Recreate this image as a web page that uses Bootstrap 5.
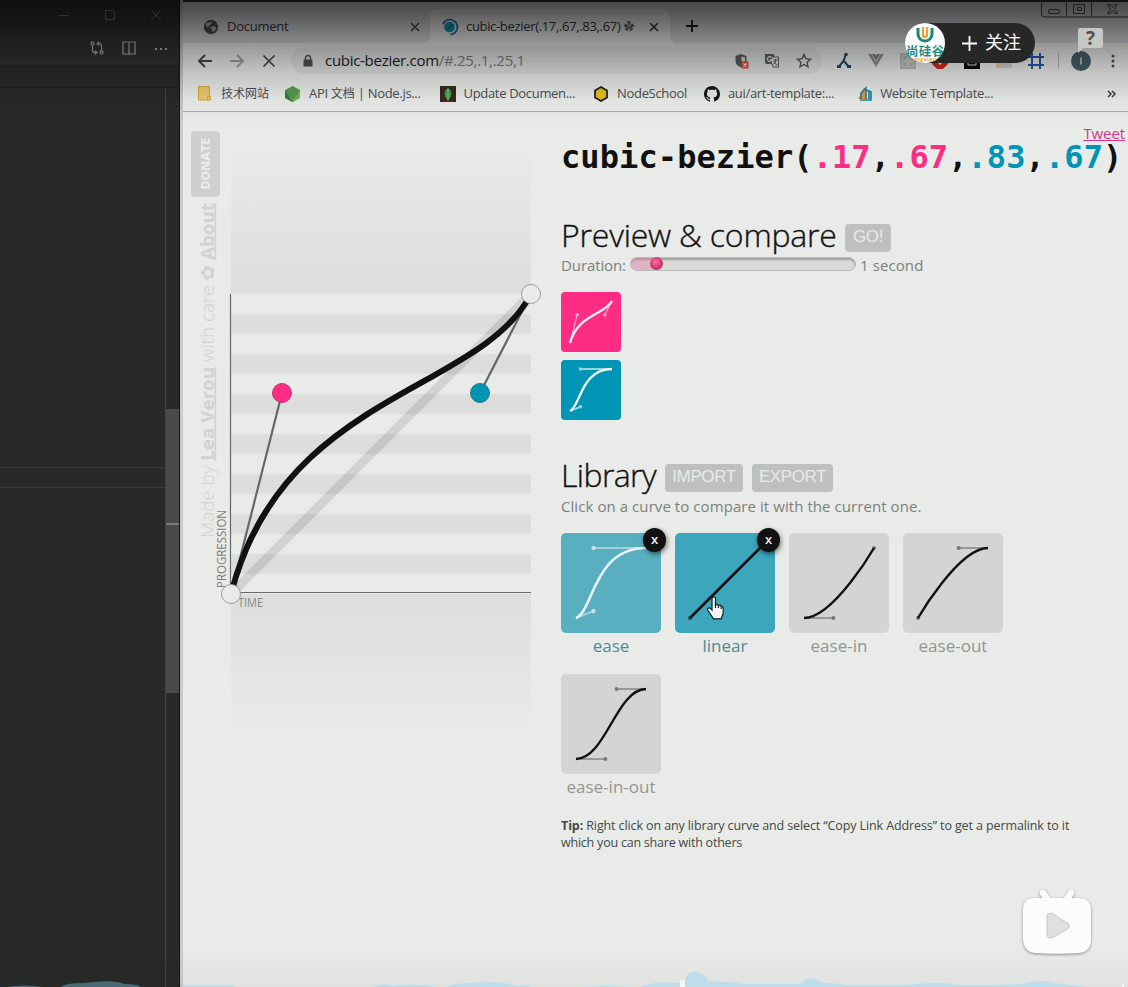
<!DOCTYPE html>
<html lang="zh-CN">
<head>
<meta charset="utf-8">
<meta name="viewport" content="width=device-width, initial-scale=1">
<title>cubic-bezier</title>
<link href="https://cdn.jsdelivr.net/npm/bootstrap@5.3.0/dist/css/bootstrap.min.css" rel="stylesheet">
<style>
  body { width: 1128px; height: 987px; background: #e8ebe7; font-family: "Open Sans", "Noto Sans CJK SC", sans-serif; color: #111; }
  svg { display: block; flex: none; overflow: visible; }
  .shade { top: 0; left: 0; right: 0; height: 125px; z-index: 5; pointer-events: none;
    background: linear-gradient(rgba(0,0,0,.68) 0, rgba(0,0,0,.62) 12px, rgba(0,0,0,.40) 40px, rgba(0,0,0,.20) 70px, rgba(0,0,0,.06) 100px, transparent 125px); }
  .shade-low { bottom: 0; left: 0; right: 0; height: 40px; pointer-events: none; background: linear-gradient(transparent, rgba(0,0,0,.04)); }

  /* code editor */
  .editor { width: 180px; background: #282a28; border-right: 1px solid #151615; }
  .ed-title { height: 30px; background: #2d302e; gap: 34px; padding-right: 17px; }
  .ed-tabs { height: 35px; background: #303331; gap: 18px; padding-right: 11px; }
  .ed-path { height: 23px; border-bottom: 1px solid #202220; }
  .ed-code { border-right: 1px solid #414340; }
  .ed-line { height: 21px; margin-top: 379px; border: solid #383a38; border-width: 1px 0; }
  .ed-scroll { width: 13px; }
  .ed-thumb { height: 284px; margin-top: 321px; background: #494b49; padding-top: 114px; }
  .ed-thumb div { height: 2px; background: #7a7c7a; }

  /* browser chrome */
  .browser { width: 948px; border-left: 3px solid #c9cccb; }
  .tabstrip { height: 43px; background: #dadce0; border-top: 2px solid #333; padding-top: 7px; font-size: 13px; color: #303436; }
  .tab-idle { width: 247px; padding: 2px 10px 0 20px; }
  .tab-live { width: 240px; padding: 2px 11px 0 12px; background: #eef0ee; border-radius: 8px 8px 0 0; }
  .tab-live::before, .tab-live::after { content: ""; position: absolute; bottom: 0; width: 8px; height: 8px; }
  .tab-live::before { left: -8px; background: radial-gradient(circle at 0 0, transparent 8px, #eef0ee 8.5px); }
  .tab-live::after { right: -8px; background: radial-gradient(circle at 100% 0, transparent 8px, #eef0ee 8.5px); }
  .t-doc { letter-spacing: -.25px; }
  .t-title { letter-spacing: -.33px; }
  .t-title i { font-style: normal; font-size: 11px; color: #66696b; }
  .toolbar { height: 34px; padding-top: 1px; background: #eef0ee; }
  .omni { width: 531px; height: 27px; border-radius: 14px; background: #e4e6e5; margin-left: 15px; padding: 0 10px 0 12px; font-size: 15px; color: #1b1d1e; letter-spacing: -.29px; }
  .omni i { font-style: normal; color: #7b8083; }
  .bookmarks { height: 35px; padding-bottom: 1px; background: #eef0ee; border-bottom: 1px solid #a9acaa; font-size: 13px; color: #4b4f53; letter-spacing: -.32px; }
  .bookmarks span, .tabstrip span, .omni span { white-space: nowrap; flex: none; }
  .bookmarks .cjk { font-size: 12px; margin: 0; letter-spacing: 0; }

  /* page */
  .plot { width: 378px; }
  .donate { left: 8px; top: 19px; width: 29px; height: 66px; border-radius: 4px; background: #cdd0cc; color: #e8ebe7; }
  .vert { writing-mode: vertical-rl; transform: rotate(180deg); white-space: nowrap; }
  .donate .vert { font-size: 12.2px; font-weight: 800; line-height: 15px; }
  .main-col { padding-top: 25px; width: 567px; }
  .tweet { right: 3px; top: 12px; font-size: 15px; line-height: 18px; color: #d6338a; letter-spacing: -.1px; }
  h1 { font: bold 32px/40px "DejaVu Sans Mono", monospace; letter-spacing: .09px; margin: 0 0 38px; white-space: nowrap; }
  .pk { color: #ff2c83; } .bl { color: #0095b5; }
  h2 { font-size: 32px; line-height: 42px; font-weight: 300; -webkit-text-stroke: .35px #111; margin: -2px 0 0; white-space: nowrap; letter-spacing: -.2px; }
  h2.h-lib { letter-spacing: -.6px; }
  .tagbtn { border: 0; border-radius: 4px; background: #bdc0bd; color: #e8ebe7; font: 17px/26px "Liberation Sans", sans-serif; letter-spacing: -.4px; padding: 0 0 2px; height: 28px; margin-top: 4px; }
  .dim { color: #7d807e; font-size: 15px; line-height: 18px; white-space: nowrap; }
  .t-click { letter-spacing: .07px; }
  .track { width: 226px; height: 14px; border-radius: 7px; background: #d9dbd8; border: 1px solid #b9bbb8; box-shadow: inset 0 2px 2px rgba(0,0,0,.28); overflow: hidden; }
  .track div { width: 25px; height: 12px; background: rgba(230,130,175,.45); }
  .knob { left: 20px; top: 0; width: 13px; height: 13px; border-radius: 50%; background: radial-gradient(circle at 45% 40%, #f670a4, #c9205f 75%); }
  .mini { width: 60px; height: 60px; border-radius: 4px; margin-bottom: 8px; }
  .curves { gap: 0 14px; padding-top: 18px; width: 460px; }
  .curve-item { width: 100px; height: 141px; font-size: 17px; line-height: 26px; color: #939694; text-align: center; white-space: nowrap; }
  .tile { height: 100px; border-radius: 5px; background: #d3d5d2; }
  .kill { right: -5px; top: -5px; width: 23px; height: 24px; border-radius: 50%; background: #111; color: #eee; font-size: 13px; font-weight: 600; line-height: 22px; box-shadow: 1px 2px 5px rgba(0,0,0,.55); }
  .tip { font-size: 12.5px; line-height: 17px; color: #444846; white-space: nowrap; letter-spacing: -.11px; }

  /* video player overlay */
  .follow { left: 905px; top: 23px; width: 130px; height: 40px; border-radius: 20px; background: #272727; color: #fff; font-size: 18px; z-index: 6; }
  .over { z-index: 6; }
</style>
</head>
<body class="position-relative overflow-hidden d-flex">

<svg width="0" height="0" class="position-absolute">
  <defs>
    <g id="c-ease"><path d="M15 85 32.5 78M85 15H32.5" stroke-width="2" opacity=".5"/><path d="M15 85C32.5 78 32.5 15 85 15" fill="none" stroke-width="2.6"/><g stroke="none" fill="currentColor" opacity=".7"><circle cx="32.500" cy="78" r="2.200"/><circle cx="32.500" cy="15" r="2.200"/></g></g>
  </defs>
</svg>

<aside class="editor d-flex flex-column flex-shrink-0">
  <div class="ed-title d-flex align-items-center justify-content-end">
    <svg width="12" height="12" stroke="#777"><path d="M0 6.500h11"/></svg>
    <svg width="12" height="12" stroke="#777" fill="none"><path d="M1.500 1.500h9v9h-9z"/></svg>
    <svg width="12" height="12" stroke="#777"><path d="m1 1 10 10M11 1 1 11"/></svg>
  </div>
  <div class="ed-tabs d-flex align-items-center justify-content-end">
    <svg width="14" height="14" viewBox="0 0 14 14" fill="none" stroke="#a6a8a6" stroke-width="1.300"><circle cx="2.500" cy="2.500" r="1.500"/><circle cx="11.500" cy="11.500" r="1.500"/><path d="M2.500 4v5.500q0 2 2 2H7M5 9.500l2 2-2 2M11.500 10V4.500q0-2-2-2H7m2-2-2 2 2 2"/></svg>
    <svg width="14" height="14" fill="none" stroke="#b4b6b4" stroke-width="1.200"><path d="M1 1h12v12H1zM7 1v12"/></svg>
    <svg width="14" height="14" fill="#b4b6b4"><path d="M1 7h2v2H1zM6 7h2v2H6zM11 7h2v2h-2z"/></svg>
  </div>
  <div class="ed-path"></div>
  <div class="d-flex flex-grow-1">
    <div class="ed-code flex-grow-1"><div class="ed-line"></div></div>
    <div class="ed-scroll"><div class="ed-thumb"><div></div></div></div>
  </div>
</aside>

<section class="browser d-flex flex-column flex-shrink-0">
  <div class="tabstrip d-flex">
    <div class="tab-idle d-flex align-items-center">
      <svg width="16" height="16" viewBox="0 0 16 16" class="me-2"><circle cx="8" cy="8" r="7.200" fill="#4a4d50"/><path d="M3 4c2-1 3 0 5-1.500l1 1.500-2 1.500-1 2-3 .5zM8 8l3-1 2.500 1.500-1.500 3-2.500 1.500-.5-3L7 9z" fill="#b5b7b8"/></svg>
      <span class="t-doc">Document</span>
      <svg width="10" height="10" class="ms-auto" stroke="#4e5154" stroke-width="1.600"><path d="m1 1 8 8M9 1 1 9"/></svg>
    </div>
    <div class="tab-live d-flex align-items-center position-relative">
      <svg width="16" height="17" viewBox="0 0 17 17" class="me-2"><circle cx="8" cy="8" r="5.700" fill="#10a5b5"/><path d="M1 5A8 8 0 1 1 9 16" fill="none" stroke="#2463c4" stroke-width="1.800"/><path d="M5.500 11 11 5.500" stroke="#0a5f77" stroke-width="1.300"/></svg>
      <span class="t-title">cubic-bezier(.17,.67,.83,.67) <i>✿</i></span>
      <svg width="10" height="10" class="ms-auto" stroke="#3e4144" stroke-width="1.700"><path d="m1 1 8 8M9 1 1 9"/></svg>
    </div>
    <svg width="12" height="12" class="align-self-center" style="margin-left:16px" stroke="#1c1e20" stroke-width="1.900"><path d="M6 0v12M0 6h12"/></svg>
  </div>

  <div class="toolbar d-flex align-items-center">
    <svg width="16" height="14" style="margin-left:14px" fill="none" stroke="#45484a" stroke-width="1.900"><path d="M15 7H2M8 1 2 7l6 6"/></svg>
    <svg width="16" height="14" style="margin-left:16px" fill="none" stroke="#a0a3a4" stroke-width="1.900"><path d="M1 7h13M8 1l6 6-6 6"/></svg>
    <svg width="14" height="14" style="margin-left:17px" stroke="#45484a" stroke-width="1.700"><path d="m1.500 1.500 11 11M12.500 1.500l-11 11"/></svg>
    <div class="omni d-flex align-items-center">
      <svg width="10" height="12" fill="#505356"><path d="M1 4.500h8q.5 0 .5.500v6.500H.5V5q0-.5.500-.5z"/><path d="M2.500 5V3a2.500 2.500 0 0 1 5 0v2" fill="none" stroke="#505356" stroke-width="1.400"/></svg>
      <span class="t-url" style="margin-left:12px">cubic-bezier.com<i>/#.25,.1,.25,1</i></span>
      <svg width="14" height="16" class="ms-auto"><path d="M6 1 11.500 3v5q0 4-5.500 6.500Q.5 12 .5 8V3z" fill="#5b5e60"/><path d="M6.500 3.500 10 4.500v4H6.500z" fill="#ddd"/><path d="M6.500 8.500h7v7h-7z" fill="#e0503a"/><path d="m8.500 10.500 3 3m0-3-3 3" stroke="#fff" stroke-width="1.100"/></svg>
      <svg width="15" height="15" style="margin-left:15px"><path d="M1 1h9l1.500 10H2.500Q1 11 1 9z" fill="#5d6063"/><path d="M8 4h6.500v10H9l-1-3" fill="#e2e4e4" stroke="#5d6063"/><path d="M7.500 4.500a2.300 2.300 0 1 0 .5 2H6" fill="none" stroke="#e8e8e8" stroke-width="1.200"/><path d="M9.500 7h4M11.500 6q1 4-2 5m0-3q1 3 4 4" fill="none" stroke="#5d6063"/></svg>
      <svg width="16" height="16" viewBox="0 0 16 16" style="margin-left:17px" fill="none" stroke="#55585a" stroke-width="1.400"><path d="m8 1.500 1.900 4.200 4.600.5-3.400 3.100.9 4.500L8 11.500l-4 2.300.9-4.500L1.500 6.200l4.600-.5z"/></svg>
    </div>
    <svg width="14" height="16" style="margin-left:15px" fill="none" stroke="#234a68" stroke-width="2"><path d="M9 1 6.500 8 2 13.500M7 8l4.500 5.500"/><path d="M0 12h4v3H0zM10 12h4v3h-4zM7.500 0h3v3h-3z" fill="#234a68" stroke="none"/></svg>
    <svg width="16" height="13" style="margin-left:17px"><path d="M0 0h3.500L8 7.500 12.500 0H16L8 13z" fill="#929596"/><path d="M4 0h3l1 2 1-2h3L8 6.500z" fill="#777a7b"/></svg>
    <svg width="16" height="16" style="margin-left:16px" fill="none" stroke="#d8dada"><path d="M0 0h16v16H0z" fill="#b9bbbc" stroke="none"/><circle cx="8" cy="8" r="2"/><circle cx="5" cy="5" r="3"/><circle cx="11" cy="5" r="3"/><circle cx="5" cy="11" r="3"/><circle cx="11" cy="11" r="3"/></svg>
    <svg width="16" height="16" style="margin-left:16px"><path d="M5 0h6l5 5v6l-5 5H5l-5-5V5z" fill="#d5281c"/><path d="M5 9V4h6v5L8 12z" fill="#eee"/></svg>
    <svg width="16" height="16" style="margin-left:16px"><path d="M0 0h16v16H0z" fill="#0c0e0e"/><path d="M4 4h8v8H4z" fill="none" stroke="#ddd"/></svg>
    <svg width="16" height="16" style="margin-left:16px"><path d="M0 5h16v10H0z" fill="#d0d2ce"/><path d="M0 14 7 5l9 0-9 6z" fill="#edc566"/></svg>
    <svg width="16" height="16" style="margin-left:16px" fill="none" stroke="#2657ad" stroke-width="2"><path d="M4 0v16M12 0v16M0 4h16M0 12h16"/></svg>
    <svg width="1" height="16" style="margin-left:14px"><path d="M0 0h1v16H0z" fill="#b5b8b9"/></svg>
    <svg width="20" height="20" style="margin-left:12px"><circle cx="10" cy="10" r="10" fill="#4a606b"/><path d="M10 6.500v7" stroke="#eee" stroke-width="1.300"/></svg>
    <svg width="4" height="14" style="margin-left:20px" fill="#505355"><circle cx="2" cy="2" r="1.500"/><circle cx="2" cy="7" r="1.500"/><circle cx="2" cy="12" r="1.500"/></svg>
  </div>

  <div class="bookmarks d-flex align-items-center">
    <svg width="13" height="15" style="margin-left:15px"><path d="M.5.500h11v10h1v3.500H.5z" fill="#f2cc70" stroke="#d9a93a"/><path d="M9.500 14v-3.500h2.500" fill="none" stroke="#d9a93a"/></svg>
    <span class="cjk" style="margin-left:10px;padding-top:1px">技术网站</span>
    <svg width="15" height="16" style="margin-left:16px"><path d="m7.500 0 7.500 4v8l-7.500 4L0 12V4z" fill="#57a052"/><path d="m0 4 7.500 12L0 12z" fill="#3c7e42"/><path d="m15 4-7.500 12L15 12z" fill="#79b55e"/></svg>
    <span style="margin-left:9px">API <span class="cjk">文档</span> | Node.js...</span>
    <svg width="16" height="16" style="margin-left:19px"><path d="M0 0h16v16H0z" fill="#3b2a22"/><path d="M8 1.500q7 6.500 0 12.500-7-6 0-12.500z" fill="#3fa54a"/><path d="M8 3v12" stroke="#a7c99b" stroke-width=".8"/></svg>
    <span style="margin-left:8px">Update Documen...</span>
    <svg width="14" height="16" style="margin-left:19px"><path d="m7 1 6 3.500v7L7 15l-6-3.500v-7z" fill="#e9c51a" stroke="#222" stroke-width="1.800"/></svg>
    <span style="margin-left:9px">NodeSchool</span>
    <svg width="16" height="16" viewBox="0 0 16 16" style="margin-left:17px"><path fill="#15181a" d="M8 0C3.580 0 0 3.580 0 8c0 3.540 2.290 6.530 5.470 7.590.4.070.55-.17.55-.38 0-.19-.01-.82-.01-1.490-2.010.37-2.530-.49-2.690-.94-.09-.23-.48-.94-.82-1.130-.28-.15-.68-.52-.01-.53.63-.01 1.080.58 1.230.82.72 1.210 1.870.87 2.330.66.070-.52.280-.87.510-1.070-1.780-.2-3.640-.89-3.640-3.950 0-.87.31-1.590.82-2.150-.08-.2-.36-1.020.08-2.120 0 0 .67-.21 2.200.82.640-.18 1.320-.27 2-.27s1.360.09 2 .27c1.530-1.040 2.200-.82 2.200-.82.44 1.100.16 1.920.08 2.120.51.56.82 1.270.82 2.150 0 3.070-1.870 3.750-3.650 3.950.29.25.54.73.54 1.480 0 1.070-.01 1.930-.01 2.200 0 .21.15.46.55.38A8 8 0 0 0 8 0z"/></svg>
    <span style="margin-left:8px">aui/art-template:...</span>
    <svg width="14" height="15" style="margin-left:24px"><path d="m0 13 5-10 3-2v12z" fill="#ef9a35"/><path d="M3 13V7l5-5v11M8 4l3 1v8M11 5l2 1v8H2" fill="none" stroke="#2587ab" stroke-width="1.700"/></svg>
    <span style="margin-left:8px">Website Template...</span>
    <svg width="9" height="8" class="ms-auto" style="margin-right:12px" fill="none" stroke="#3d4043" stroke-width="1.500"><path d="m1 1 3 3-3 3M5 1l3 3-3 3"/></svg>
  </div>

  <div class="page d-flex flex-grow-1 position-relative">
    <div class="plot position-relative flex-shrink-0">
      <svg width="378" height="875" viewBox="183 112 378 875">
        <defs>
          <linearGradient id="up" x2="0" y2="1"><stop offset="0" stop-color="#dcdedb" stop-opacity="0"/><stop offset="1" stop-color="#dcdedb"/></linearGradient>
          <linearGradient id="dn" x2="0" y2="1"><stop offset="0" stop-color="#dcdedb"/><stop offset="1" stop-color="#dcdedb" stop-opacity="0"/></linearGradient>
        </defs>
        <text transform="translate(213.500 538) rotate(-90)" font-size="18" fill="#d0d3cf" font-weight="300" textLength="335" lengthAdjust="spacingAndGlyphs">Made by <tspan font-weight="700" text-decoration="underline">Lea Verou</tspan> with care <tspan font-family="DejaVu Sans" font-weight="700">✿</tspan> <tspan font-weight="700" text-decoration="underline">About</tspan></text>
        <path d="M231 144h300v150H231z" fill="url(#up)"/>
        <path d="M231 594h300v140H231z" fill="url(#dn)"/>
        <path d="M231 324h300M231 364h300M231 404h300M231 444h300M231 484h300M231 524h300M231 564h300" stroke="#dcdedb" stroke-width="20"/>
        <path d="M231 594 531 294" stroke="#000" stroke-opacity=".1" stroke-width="9"/>
        <path d="M230.500 294v299M230 592.500h301" stroke="#666966" stroke-width="1.200"/>
        <text transform="translate(226 588) rotate(-90)" font-size="12" fill="#7a7d7a" textLength="78" lengthAdjust="spacingAndGlyphs">PROGRESSION</text>
        <text x="238" y="607" font-size="12" fill="#868986" textLength="25" lengthAdjust="spacingAndGlyphs">TIME</text>
        <path d="M231 594 282 393M531 294 480 393" stroke="#656865" stroke-width="2.200"/>
        <path d="M231 594C282 393 480 393 531 294" fill="none" stroke="#111" stroke-width="6"/>
        <g stroke-width="1"><circle cx="231" cy="594" r="9.500" fill="#e8ebe7" stroke="#9b9d9b"/><circle cx="531" cy="294" r="9.500" fill="#e8ebe7" stroke="#9b9d9b"/><circle cx="282" cy="393" r="9.500" fill="#ff2c83" stroke="#b83a72"/><circle cx="480" cy="393" r="9.500" fill="#0095b5" stroke="#23798d"/></g>
      </svg>
      <div class="donate position-absolute d-flex align-items-center justify-content-center"><span class="vert">DONATE</span></div>
    </div>

    <a class="tweet position-absolute" href="#">Tweet</a>
    <main class="main-col">
      <h1>cubic-bezier(<span class="pk">.17</span>,<span class="pk">.67</span>,<span class="bl">.83</span>,<span class="bl">.67</span>)</h1>
      <div class="d-flex align-items-center" style="height:42px"><h2 class="h-prev">Preview &amp; compare</h2><button class="tagbtn ms-auto" style="width:46px;margin-right:237px">GO!</button></div>
      <div class="d-flex dim" style="height:36px;margin-top:-1px">
        <span style="width:69px;letter-spacing:-.1px">Duration:</span>
        <div class="position-relative" style="top:1px"><div class="track"><div></div></div><div class="knob position-absolute"></div></div>
        <span style="margin-left:4px;letter-spacing:.1px">1 second</span>
      </div>
      <div class="mini" style="background:#ff2c83"><svg width="60" height="60" viewBox="0 0 100 100" stroke="#fff"><g opacity=".6"><path d="M15 85 27 38M85 15 73 38" stroke-width="2"/><circle cx="27" cy="38" r="3" fill="#fff" stroke="none"/><circle cx="73" cy="38" r="3" fill="#fff" stroke="none"/></g><path d="M15 85C27 38 73 38 85 15" stroke-width="4" fill="none" opacity=".92"/></svg></div>
      <div class="mini" style="background:#0095b5"><svg width="60" height="60" viewBox="0 0 100 100" stroke="#fff"><g opacity=".6"><path d="M15 85 32.500 78M85 15H32.500" stroke-width="3"/><circle cx="32.500" cy="78" r="3" fill="#fff" stroke="none"/><circle cx="32.500" cy="15" r="3" fill="#fff" stroke="none"/></g><path d="M15 85C32.500 78 32.500 15 85 15" stroke-width="4" fill="none" opacity=".92"/></svg></div>
      <div class="d-flex align-items-center" style="height:42px;margin-top:35px"><h2 class="h-lib" style="width:104px">Library</h2><button class="tagbtn" style="width:78px">IMPORT</button><button class="tagbtn" style="width:81px;margin-left:9px">EXPORT</button></div>
      <div class="dim t-click">Click on a curve to compare it with the current one.</div>

      <div class="curves d-flex flex-wrap">
        <div class="curve-item position-relative" style="color:#4f8a9a">
          <div class="tile" style="background:#59afc0"><svg width="100" height="100" stroke="#e4f2f6" color="#e4f2f6"><use href="#c-ease"/></svg></div>ease
          <div class="kill position-absolute">x</div>
        </div>
        <div class="curve-item position-relative" style="color:#4f8a9a">
          <div class="tile" style="background:#3ba6bc"><svg width="100" height="100" stroke="#111" fill="#111"><path d="M15 85 85 15" stroke-width="2.600"/><circle cx="15" cy="85" r="2" opacity=".6" stroke="none"/></svg></div>linear
          <div class="kill position-absolute">x</div>
        </div>
        <div class="curve-item"><div class="tile"><svg width="100" height="100" stroke="#111" fill="none"><path d="M15 85h29.400" stroke-width="2" opacity=".3"/><g fill="#777" stroke="none"><circle cx="44.400" cy="85" r="2"/><circle cx="85" cy="15" r="2"/></g><path d="M15 85C44.400 85 85 15 85 15" stroke-width="2.400"/></svg></div>ease-in</div>
        <div class="curve-item"><div class="tile"><svg width="100" height="100" stroke="#111" fill="none"><path d="M55.600 15H85" stroke-width="2" opacity=".3"/><g fill="#777" stroke="none"><circle cx="55.600" cy="15" r="2"/><circle cx="15" cy="85" r="2"/></g><path d="M15 85C15 85 55.600 15 85 15" stroke-width="2.400"/></svg></div>ease-out</div>
        <div class="curve-item"><div class="tile"><svg width="100" height="100" stroke="#111" fill="none"><path d="M55.600 15H85M15 85h29.400" stroke-width="2" opacity=".3"/><g fill="#777" stroke="none"><circle cx="55.600" cy="15" r="2"/><circle cx="44.400" cy="85" r="2"/></g><path d="M15 85C44.400 85 55.600 15 85 15" stroke-width="2.400"/></svg></div>ease-in-out</div>
      </div>
      <div class="tip" style="margin-top:2px"><b>Tip:</b> Right click on any library curve and select “Copy Link Address” to get a permalink to it<br><span style="letter-spacing:-.22px">which you can share with others</span></div>
    </main>
  </div>
</section>

<div class="shade position-absolute"></div>
<div class="shade-low position-absolute"></div>

<!-- window buttons -->
<svg class="position-absolute over" style="left:1041px;top:0" width="87" height="18" fill="none" stroke="#1d1f1f"><path d="M.5 0v14q0 3 3 3H87M25.500 0v17M50.500 0v17"/><rect x="7.500" y="9.500" width="11" height="4" rx="1.500"/><path d="M32.500 4.500h11v9h-11zM36.500 7.500h4v3h-4z"/><path d="m66.500 4.500 3 0 2 3 2-3h3l-3 4.500 3 4.500h-3l-2-3-2 3h-3l3-4.500z"/></svg>

<!-- follow pill -->
<div class="follow position-absolute d-flex align-items-center">
  <svg width="40" height="40"><circle cx="20" cy="20" r="20" fill="#fff"/><path d="M13 5v6a7 7 0 0 0 14 0V5" fill="none" stroke="#16897a" stroke-width="3"/><path d="M18 4v8a2 2 0 0 0 4 0V4" fill="none" stroke="#e9a23c" stroke-width="2.400"/><text x="1" y="33" font-size="12.500" font-weight="700" fill="#1d8f80" textLength="38">尚硅谷</text><text x="9" y="38" font-size="5" font-weight="700" fill="#e9a23c" textLength="22">atguigu</text></svg>
  <svg width="15" height="15" style="margin-left:17px" stroke="#fff" stroke-width="1.800"><path d="M7.500 0v15M0 7.500h15"/></svg>
  <span style="margin-left:8px;padding-bottom:1px">关注</span>
</div>

<!-- help bubble -->
<svg class="position-absolute over" style="left:1077px;top:27px" width="28" height="26"><path d="M3 1h20q3 0 3 3v14q0 3-3 3H6l-5 5V4q0-3 2-3z" fill="#c6c8c8"/><text x="13.500" y="18" text-anchor="middle" font-size="19" font-weight="700" fill="#4f5151">?</text></svg>

<!-- hand pointer -->
<svg class="position-absolute over" style="left:706px;top:596px" width="20" height="24" fill="#f4f6f6" stroke="#0d2026" stroke-width="1.200"><path d="M6 13V3q0-2 1.800-2T9.500 3v6q2-1 3 .5 2-.8 2.700.8 2-.3 2 2v5l-2 5.500H7.500L2 14.500q-1-2 .5-2.500T6 14z"/><path d="M9.500 9v3M12.500 9.500V12M15.200 10.500V13" fill="none"/></svg>

<!-- player logo -->
<svg class="position-absolute over" style="left:1018px;top:884px;filter:drop-shadow(0 1px 1.500px rgba(0,0,0,.4))" width="78" height="74"><path d="m25 9 6 9M53 9l-6 9" stroke="#fcfcfc" stroke-width="6.500" stroke-linecap="round"/><path d="M17 14h44q12 0 12 12v29q0 13-12 14-22 1.500-44 0-11-1-12-14V26q0-12 12-12z" fill="#fcfcfc"/><path d="M31 29.500q3-1 5 1l14 9q3 2 0 5l-14 8.500q-7 3-7-3V32.500q0-3 2-3z" fill="#dfe1df" stroke="#b9bbb9" stroke-width=".8"/></svg>

<!-- danmaku density wave -->
<svg class="position-absolute" style="left:0;top:967px" width="1128" height="20" viewBox="0 967 1128 20"><path d="M6 987Q25 984 42 987zM61 987Q65 983 85 983 111 979 125 984 137 984 141 987z" fill="#4c6a76"/><path d="M183 985h50l3 2h-53zM373 987q10-5 20-1 25-3 43 1zM446 987q8-4 26-4 27-3 45 3 10-2 14 1zM580 987q25-2 50 0zM641 987q10-6 39-4v4zM685 987v-6c3-11 15-14 23-1 5 3 15 0 35 4h55c6-1 9-9 19-4 8 5 15 2 30 5h60q40-4 48 0 35 1 67-1 22-5 32-1l35 4z" fill="#bcdde9"/><path d="M680 980h5v7h-5zM1122 984h2v3h-2z" fill="#f5f7f5"/></svg>

<script src="https://cdn.jsdelivr.net/npm/bootstrap@5.3.0/dist/js/bootstrap.bundle.min.js"></script>
</body>
</html>
